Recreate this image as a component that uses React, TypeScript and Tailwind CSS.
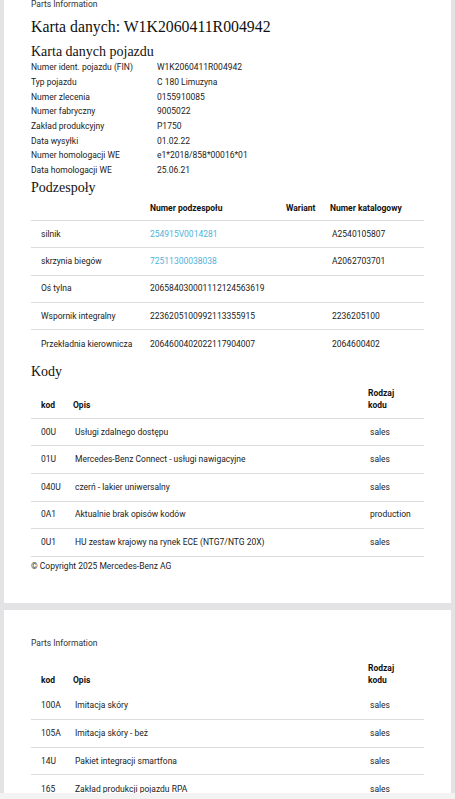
import React from 'react';

const sans = { fontFamily: 'Roboto, "Liberation Sans", sans-serif' };
const serif = { fontFamily: '"Liberation Serif", "DejaVu Serif", serif' };

const vehicle: [string, string][] = [
  ['Numer ident. pojazdu (FIN)', 'W1K2060411R004942'],
  ['Typ pojazdu', 'C 180 Limuzyna'],
  ['Numer zlecenia', '0155910085'],
  ['Numer fabryczny', '9005022'],
  ['Zakład produkcyjny', 'P1750'],
  ['Data wysyłki', '01.02.22'],
  ['Numer homologacji WE', 'e1*2018/858*00016*01'],
  ['Data homologacji WE', '25.06.21'],
];

const parts: { name: string; num: string; link?: boolean; cat: string }[] = [
  { name: 'silnik', num: '254915V0014281', link: true, cat: 'A2540105807' },
  { name: 'skrzynia biegów', num: '72511300038038', link: true, cat: 'A2062703701' },
  { name: 'Oś tylna', num: '206584030001112124563619', cat: '' },
  { name: 'Wspornik integralny', num: '2236205100992113355915', cat: '2236205100' },
  { name: 'Przekładnia kierownicza', num: '2064600402022117904007', cat: '2064600402' },
];

const codes1: [string, string, string][] = [
  ['00U', 'Usługi zdalnego dostępu', 'sales'],
  ['01U', 'Mercedes-Benz Connect - usługi nawigacyjne', 'sales'],
  ['040U', 'czerń - lakier uniwersalny', 'sales'],
  ['0A1', 'Aktualnie brak opisów kodów', 'production'],
  ['0U1', 'HU zestaw krajowy na rynek ECE (NTG7/NTG 20X)', 'sales'],
];

const codes2: [string, string, string][] = [
  ['100A', 'Imitacja skóry', 'sales'],
  ['105A', 'Imitacja skóry - beż', 'sales'],
  ['14U', 'Pakiet integracji smartfona', 'sales'],
  ['165', 'Zakład produkcji pojazdu RPA', 'sales'],
];

function CodesHeader() {
  return (
    <div className="flex items-end h-[35px] pb-[6px] text-[8.5px] font-bold text-[#111] leading-[12.5px]">
      <div className="w-[42px] pl-[10px]">kod</div>
      <div className="w-[295px]">Opis</div>
      <div className="w-[56px]">Rodzaj<br />kodu</div>
    </div>
  );
}

function CodeRow({ row, last }: { row: [string, string, string]; last?: boolean }) {
  return (
    <div className={`flex items-center h-[27.6px] text-[8.5px] text-[#222] ${last ? '' : 'border-b border-[#dcdcdc]'}`}>
      <div className="w-[42px] pl-[10px]">{row[0]}</div>
      <div className="w-[295px] pl-[2px]">{row[1]}</div>
      <div className="w-[56px] pl-[2px]">{row[2]}</div>
    </div>
  );
}

export default function App() {
  return (
    <div className="relative h-[799px] w-[455px] overflow-hidden bg-[#e3e3e6] flex flex-col" style={sans}>
      <div className="mx-[4px] bg-white h-[603px] px-[27px] shrink-0">
        <div className="text-[8.5px] text-[#333] leading-none">Parts Information</div>
        <h1 className="text-[15.8px] text-[#111] leading-none mt-[10px]" style={serif}>
          Karta danych: W1K2060411R004942
        </h1>
        <h2 className="text-[14px] text-[#111] leading-none mt-[11px]" style={serif}>
          Karta danych pojazdu
        </h2>
        <div className="mt-[1px] text-[8.5px] text-[#222]">
          {vehicle.map(([k, v]) => (
            <div key={k} className="flex h-[14.7px] items-center">
              <div className="w-[126px]">{k}</div>
              <div>{v}</div>
            </div>
          ))}
        </div>
        <h2 className="text-[14px] text-[#111] leading-none mt-[3px]" style={serif}>
          Podzespoły
        </h2>
        <div className="mt-[2px]">
          <div className="flex items-center h-[24px] text-[8.5px] font-bold text-[#111] border-b border-[#dcdcdc]">
            <div className="w-[119px]"></div>
            <div className="w-[136px]">Numer podzespołu</div>
            <div className="w-[44px]">Wariant</div>
            <div className="w-[94px]">Numer katalogowy</div>
          </div>
          {parts.map((p, i) => (
            <div
              key={p.name}
              className={`flex items-center h-[27.4px] text-[8.5px] text-[#222] ${i < parts.length - 1 ? 'border-b border-[#dcdcdc]' : ''}`}
            >
              <div className="w-[119px] pl-[10px]">{p.name}</div>
              <div className={`w-[136px] ${p.link ? 'text-[#4fb3d9]' : ''}`}>{p.num}</div>
              <div className="w-[44px]"></div>
              <div className="w-[94px] pl-[2px]">{p.cat}</div>
            </div>
          ))}
        </div>
        <h2 className="text-[14px] text-[#111] leading-none mt-[7px]" style={serif}>
          Kody
        </h2>
        <div className="mt-[4px]">
          <div className="border-b border-[#dcdcdc]">
            <CodesHeader />
          </div>
          {codes1.map((r) => (
            <CodeRow key={r[0]} row={r} />
          ))}
        </div>
        <div className="text-[8.5px] text-[#222] mt-[3px]">© Copyright 2025 Mercedes-Benz AG</div>
      </div>
      <div className="mx-[4px] mt-[7px] bg-white flex-1 px-[27px] pt-[29px]">
        <div className="text-[8.5px] text-[#333] leading-none">Parts Information</div>
        <div className="mt-[10px]">
          <CodesHeader />
          {codes2.map((r, i) => (
            <CodeRow key={r[0]} row={r} last={i === codes2.length - 1} />
          ))}
        </div>
      </div>
      <div className="absolute left-0 top-[793px] w-[455px] h-[6px] bg-[#f3f3f4]"></div>
    </div>
  );
}
